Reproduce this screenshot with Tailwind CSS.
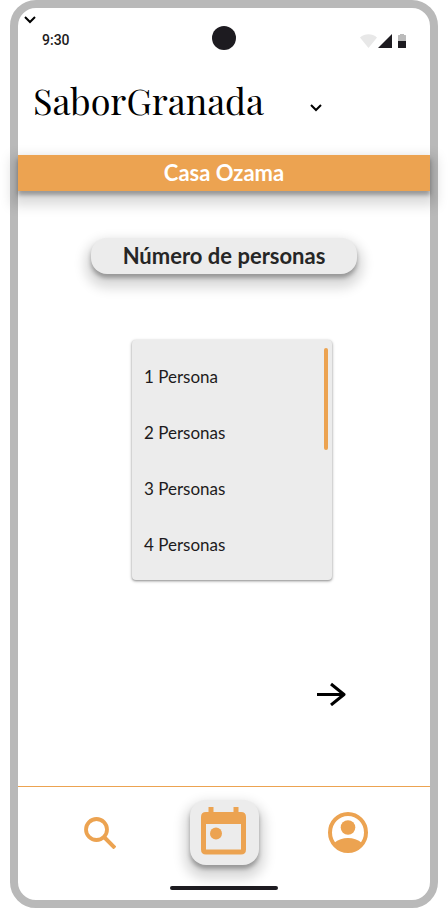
<!DOCTYPE html>
<html lang="es">
<head>
<meta charset="utf-8">
<meta name="viewport" content="width=device-width, initial-scale=1">
<title>SaborGranada</title>
<script src="https://cdn.jsdelivr.net/npm/@tailwindcss/browser@4"></script>
</head>
<body class="bg-white font-['Lato',sans-serif] text-[#1d1b20]">
<div class="relative mx-[10px] flex min-h-screen flex-col rounded-[26px] border-8 border-[#b9b9b9]">
  <button type="button" aria-label="Desplegar" class="absolute top-2 left-1.5">
    <svg class="h-2 w-3" viewBox="0 0 12 8" fill="none" stroke="#000" stroke-width="2"><path d="M1 1l5 5 5-5"/></svg>
  </button>

  <div class="grid h-16 grid-cols-3 items-center px-6">
    <time class="font-['Roboto',sans-serif] text-sm font-medium">9:30</time>
    <div class="mb-1 size-6 justify-self-center rounded-full bg-[#1d1b20]"></div>
    <div class="flex items-center justify-end">
      <svg class="h-4 w-[46px]" viewBox="0 0 46 16" role="img" aria-label="Wifi, señal y batería">
        <path d="M0 5.500C5 1.200 12 1.200 17 5.500L8.500 16z" fill="#e8e8e8"/>
        <path d="M32 2v14H18z" fill="#1d1b20"/>
        <path d="M38 9V3.500q0-.500.500-.500H40V2h4v1h1.500q.500 0 .500.500V9z" fill="#bbb"/>
        <path d="M38 9h8v6.500q0 .500-.500.500h-7q-.500 0-.500-.500z" fill="#1d1b20"/>
      </svg>
    </div>
  </div>

  <header class="flex items-center gap-[46px] px-[15px] pt-1 pb-[31px]">
    <h1 class="font-['Playfair_Display','Liberation_Serif',serif] text-4xl leading-12 text-black">SaborGranada</h1>
    <button type="button" aria-label="Cambiar restaurante" class="pt-4">
      <svg class="h-2 w-3" viewBox="0 0 12 8" fill="none" stroke="#000" stroke-width="2"><path d="M1 1l5 5 5-5"/></svg>
    </button>
  </header>

  <h2 class="bg-[#eca351] text-center text-[22px] leading-9 font-bold text-white shadow-[0_8px_12px_6px_rgba(0,0,0,0.15),0_4px_4px_rgba(0,0,0,0.3)]">Casa Ozama</h2>

  <main class="flex flex-1 flex-col items-center px-4 pt-[47px]">
    <h3 id="personas" class="rounded-2xl bg-[#ececec] px-8 text-[22px] leading-9 font-bold text-[#262626] shadow-[0_8px_12px_6px_rgba(0,0,0,0.15),0_4px_4px_rgba(0,0,0,0.3)]">Número de personas</h3>

    <div class="mt-[66px] ml-4 flex w-[200px] justify-between rounded bg-[#ececec] py-2 pr-1 shadow-[0_1px_2px_rgba(0,0,0,0.3),0_1px_3px_1px_rgba(0,0,0,0.15)]">
      <ul aria-labelledby="personas" class="flex-1">
        <li><button type="button" class="h-14 w-full px-3 pt-0.5 text-left text-[17px]">1 Persona</button></li>
        <li><button type="button" class="h-14 w-full px-3 pt-0.5 text-left text-[17px]">2 Personas</button></li>
        <li><button type="button" class="h-14 w-full px-3 pt-0.5 text-left text-[17px]">3 Personas</button></li>
        <li><button type="button" class="h-14 w-full px-3 pt-0.5 text-left text-[17px]">4 Personas</button></li>
      </ul>
      <div class="h-[102px] w-1 rounded-full bg-[#eca351]"></div>
    </div>

    <button type="button" aria-label="Siguiente" class="mt-[102px] mr-[66px] self-end">
      <svg class="h-6 w-8" viewBox="0 0 32 24" fill="none" stroke="#000" stroke-width="3"><path d="M1 12.500h27"/><path d="M15 2l13 10.500L15 23" stroke-linejoin="round"/></svg>
    </button>
  </main>

  <footer class="border-t border-[#eca351] pt-[13px] pb-2.5">
    <nav class="grid grid-cols-3 place-items-center px-5" aria-label="Principal">
      <a href="#buscar" aria-label="Buscar">
        <svg class="size-8" viewBox="0 0 32 32" fill="none" stroke="#eca351"><circle cx="12.500" cy="12.500" r="10.500" stroke-width="3.800"/><path d="M19.500 19.500L31 31" stroke-width="4"/></svg>
      </a>
      <a href="#reservas" aria-label="Reservas" aria-current="page" class="rounded-2xl bg-[#ececec] pt-[7px] pr-[13px] pb-2.5 pl-[11px] shadow-[0_8px_12px_6px_rgba(0,0,0,0.15),0_4px_4px_rgba(0,0,0,0.3)]">
        <svg class="h-12 w-[45px]" viewBox="0 0 45 48" fill="#eca351"><path fill-rule="evenodd" d="M7.500 0h5v5h20V0h5v5H40q5 0 5 5v32.500q0 5-5 5H5q-5 0-5-5V10q0-5 5-5h2.500zM5 17v25.500h35V17z"/><circle cx="15" cy="26.500" r="6"/></svg>
      </a>
      <a href="#perfil" aria-label="Perfil">
        <svg class="h-[41px] w-10" viewBox="0 0 40 41"><ellipse cx="20" cy="20.500" rx="18" ry="18.500" fill="none" stroke="#eca351" stroke-width="4"/><circle cx="20" cy="15.500" r="7.300" fill="#eca351"/><path d="M6 31C14 24.300 26 24.300 34 31Q28 40 20 40T6 31z" fill="#eca351"/></svg>
      </a>
    </nav>
    <div class="mx-auto mt-[21px] h-1 w-[108px] rounded-full bg-[#1d1b20]"></div>
  </footer>
</div>
</body>
</html>
